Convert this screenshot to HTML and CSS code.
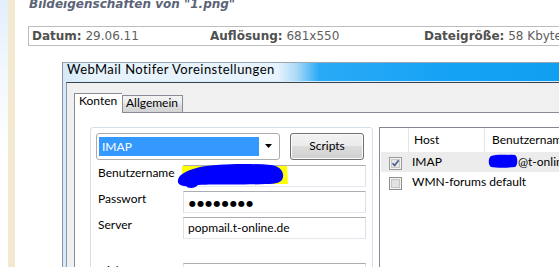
FILE: index.html
```html
<!DOCTYPE html>
<html lang="de">
<head>
<meta charset="utf-8">
<title>Bildeigenschaften</title>
<link rel="stylesheet" href="styles.css">
</head>
<body>
<div class="page">
  <div class="edge"></div>
  <div class="rule"></div>
  <div class="main">
    <h1 class="title">Bildeigenschaften von "1.png"</h1>
    <div class="info">
      <div class="cell c1"><b>Datum:</b> 29.06.11</div>
      <div class="cell c2"><b>Auflösung:</b> 681x550</div>
      <div class="cell c3"><b>Dateigröße:</b> 58 Kbyte</div>
    </div>
    <div class="shot">
      <div class="win">
        <div class="titlebar"><span class="ttext">WebMail Notifer Voreinstellungen</span></div>
        <div class="client">
          <div class="tabs">
            <div class="tab active">Konten</div>
            <div class="tab">Allgemein</div>
          </div>
          <div class="panel">
            <div class="group">
              <div class="toprow">
                <div class="combo">
                  <div class="sel">IMAP</div>
                  <div class="drop"><svg width="7" height="4" viewBox="0 0 7 4"><path d="M0 0H7L3.5 4Z" fill="#000"/></svg></div>
                </div>
                <div class="btn">Scripts</div>
              </div>
              <div class="frow">
                <div class="lbl">Benutzername</div>
                <div class="field">
                  <svg class="scribble" width="114" height="27" viewBox="0 0 114 27">
                    <path d="M6 3H111L112 21H6Z" fill="#ffff00"/>
                    <path d="M2 17C3 11 12 7 24 4C40 1 70 0 95 2C103 3 108 8 107 14C106 20 100 21 90 21C70 22 40 21 22 22C20 24 18 25 15 25C12 25 11 24 10 23C5 23 1 21 2 17Z" fill="#0000ff"/>
                  </svg>
                </div>
              </div>
              <div class="frow">
                <div class="lbl">Passwort</div>
                <div class="field"><span class="dots">●●●●●●●●</span></div>
              </div>
              <div class="frow">
                <div class="lbl">Server</div>
                <div class="field">popmail.t-online.de</div>
              </div>
              <div class="frow gap">
                <div class="lbl">Nickname</div>
                <div class="field"></div>
              </div>
            </div>
            <div class="list">
              <div class="lhead">
                <div class="col k"></div>
                <div class="col h"><span class="ht host">Host</span></div>
                <div class="col u"><span class="ht user">Benutzername</span></div>
              </div>
              <div class="lrow selrow">
                <div class="col k"><span class="chk"><svg width="13" height="13" viewBox="0 0 13 13"><rect x="0.5" y="0.5" width="12" height="12" fill="#f4f4f4" stroke="#9a9a9a"/><rect x="2.5" y="2.5" width="8" height="8" fill="#e6e6e6" stroke="#c8c8c8"/><path d="M3.5 6.3L5.6 8.6L9.6 3.2" fill="none" stroke="#4b5f8e" stroke-width="1.6"/></svg></span></div>
                <div class="col h"><span class="ct">IMAP</span></div>
                <div class="col u"><span class="ct"><svg class="blob" width="30" height="15" viewBox="0 0 30 15"><path d="M3 2C8 0 20 1 27 1C30 2 30 12 27 13C20 14 8 14 3 13C0 11 0 4 3 2Z" fill="#0000ff"/></svg>@t-online.de</span></div>
              </div>
              <div class="lrow">
                <div class="col k"><span class="chk"><svg width="13" height="13" viewBox="0 0 13 13"><rect x="0.5" y="0.5" width="12" height="12" fill="#f4f4f4" stroke="#8e8f8f"/><rect x="2.5" y="2.5" width="8" height="8" fill="#e2e2e2" stroke="#c4c4c4"/></svg></span></div>
                <div class="col h wide"><span class="ct">WMN-forums default</span></div>
              </div>
            </div>
          </div>
        </div>
      </div>
    </div>
  </div>
</div>
</body>
</html>
```

FILE: styles.css
```css
* { box-sizing: border-box; }
html, body { margin: 0; padding: 0; background: #fff; overflow: hidden; }
body { width: 559px; height: 267px; }

.page { display: flex; height: 267px; overflow: hidden; }
.edge { width: 8px; flex: none; background: linear-gradient(#e2eefb, #f2f8fd 70px, #fff 160px); }
.rule { width: 7px; flex: none; background: #f3e9d1; }
.main { flex: 1; min-width: 0; padding-left: 13px; overflow: hidden; }

.title {
  margin: -2px 0 0 1px;
  font: italic bold 12px/12px "DejaVu Sans", Verdana, sans-serif;
  color: #5b6476;
  white-space: nowrap;
}

.info {
  margin-top: 16px;
  width: 600px;
  height: 20px;
  border: 1px solid #bdbdbd;
  display: flex;
  padding-left: 3px;
  font: 12px/18px "DejaVu Sans", Verdana, sans-serif;
  color: #5e5e5e;
  white-space: nowrap;
}
.info b { color: #505050; }
.c1 { width: 178px; flex: none; }
.c2 { width: 214px; flex: none; }
.c3 { flex: none; }

.shot { margin: 16px 0 0 34px; }

.win {
  width: 560px;
  border-left: 1px solid #8695a4;
  border-top: 1px solid #9aa6b2;
  padding-left: 3px;
  background: linear-gradient(to right, #d4e9f9 0, #e6f3fc 30px, #e8f4fd 214px, #a9d9f8 234px, #2aaaf6 256px, #16a3f5 380px, #0e9cf0 100%);
}
.titlebar {
  height: 19px;
  padding-left: 1px;
  border-bottom: 1px solid #d6ecfb;
  font: 13px/13px Lato, "Open Sans", sans-serif;
  letter-spacing: 0.45px;
  color: #000;
  white-space: nowrap;
}

.client {
  border-top: 1px solid #3a434d;
  border-left: 1px solid #8d9aa6;
  background: #f0f0f0;
  padding: 10px 0 0 7px;
  height: 200px;
  font: 12px Lato, "Open Sans", sans-serif;
  color: #000;
}

.tabs {
  display: flex;
  align-items: flex-end;
  height: 20px;
  margin-bottom: -1px;
  position: relative;
  z-index: 1;
}
.tab {
  height: 17px;
  margin-bottom: 1px;
  width: 61px;
  padding-left: 3px;
  border: 1px solid #898c95;
  border-bottom: none;
  line-height: 14px;
  background: linear-gradient(#f3f3f3, #ebebeb 45%, #dedede 55%, #d3d3d3);
  white-space: nowrap;
}
.tab.active {
  height: 20px;
  margin-bottom: 0;
  width: 48px;
  padding-left: 4px;
  background: #fff;
  border-right: none;
}

.panel {
  display: flex;
  align-items: flex-start;
  background: #fff;
  border-top: 1px solid #898c95;
  border-left: 1px solid #898c95;
  padding: 14px 0 0 15px;
  height: 160px;
}

.group {
  width: 283px;
  height: 160px;
  flex: none;
  border: 1px solid #d5dfe5;
  border-radius: 3px;
  padding: 5px 0 0 5px;
}

.toprow { display: flex; gap: 10px; height: 27px; }
.combo {
  width: 184px;
  height: 27px;
  border: 1px solid #acacac;
  border-radius: 3px;
  padding: 3px 0 3px 2px;
  display: flex;
  background: #fff;
}
.sel {
  width: 160px;
  background: #3399ff;
  color: #fff;
  padding-left: 3px;
  line-height: 19px;
}
.drop { flex: 1; display: flex; align-items: center; justify-content: center; padding-bottom: 2px; padding-right: 1px; }
.drop svg { display: block; }

.btn {
  width: 74px;
  height: 27px;
  border: 1px solid #707070;
  border-radius: 3px;
  background: linear-gradient(#f2f2f2, #ebebeb 50%, #dddddd 50%, #cfcfcf);
  box-shadow: inset 0 0 0 1px #fbfbfb;
  text-align: center;
  line-height: 23px;
}

.frow { display: flex; margin-top: 4px; padding-left: 2px; height: 22px; }
.toprow + .frow { margin-top: 5px; }
.frow.gap { margin-top: 24px; }
.lbl { width: 85px; line-height: 16px; white-space: nowrap; }
.field {
  position: relative;
  width: 183px;
  height: 22px;
  border: 1px solid #dbdfe6;
  border-top-color: #abadb3;
  border-bottom-color: #e3e9ef;
  padding-left: 4px;
  line-height: 20px;
  background: #fff;
}
.scribble { position: absolute; left: -8px; top: -3px; display: block; }
.dots { font: 8px/20px "DejaVu Sans", sans-serif; letter-spacing: 1.2px; position: relative; left: 1px; }

.list {
  width: 200px;
  height: 160px;
  flex: none;
  margin-left: 6px;
  border: 1px solid #828790;
  border-right: none;
  background: #fff;
}
.lhead { display: flex; height: 24px; }
.lhead .col { border-right: 1px solid #e5e5e5; }
.col { flex: none; }
.col.k { width: 29px; }
.col.h { width: 76px; }
.col.u { width: 100px; white-space: nowrap; }
.ht { display: block; line-height: 16px; padding-top: 4px; white-space: nowrap; }
.host { padding-left: 5px; }
.user { padding-left: 7px; }

.lrow { display: flex; height: 20px; margin-left: 1px; }
.lrow .col.k { width: 28px; }
.selrow { background: #ececec; }
.chk { display: block; padding: 5px 0 0 8px; }
.chk svg { display: block; }
.ct { display: flex; align-items: center; padding: 2px 0 0 3px; line-height: 16px; white-space: nowrap; }
.col.wide { width: 200px; }
.blob { display: block; margin-top: -1px; }
```
